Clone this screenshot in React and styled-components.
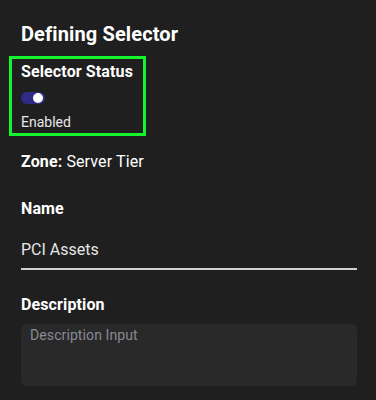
import React from 'react'
import styled, { createGlobalStyle } from 'styled-components'

const GlobalStyle = createGlobalStyle`
  html, body {
    margin: 0;
    padding: 0;
    background: #1f1f1f;
    font-family: Roboto, "Liberation Sans", sans-serif;
    color: #ffffff;
  }
`

const Page = styled.div`
  width: 376px;
  height: 400px;
  overflow: hidden;
  padding: 22px 19px 0 21px;
  box-sizing: border-box;
`

const Title = styled.h2`
  margin: 0;
  font-size: 20px;
  font-weight: 700;
  letter-spacing: 0.12px;
  line-height: 24px;
`

const StatusBox = styled.div`
  margin: 10px 0 0 -12px;
  width: 137px;
  height: 80px;
  box-sizing: border-box;
  border: 3px solid #14f52e;
  padding: 3px 0 0 9px;
  display: flex;
  flex-direction: column;
`

const Label = styled.div`
  font-size: 16px;
  font-weight: 700;
  letter-spacing: 0.12px;
  line-height: 20px;
`

const Toggle = styled.div`
  margin-top: 10px;
  width: 24px;
  height: 12px;
  border-radius: 6px;
  background: #2f2b86;
  position: relative;
  &::after {
    content: '';
    position: absolute;
    right: 2px;
    top: 1px;
    width: 10px;
    height: 10px;
    border-radius: 50%;
    background: #ffffff;
  }
`

const Small = styled.div`
  margin-top: 9px;
  font-size: 14px;
  line-height: 18px;
  color: #e8e8e8;
`

const Zone = styled.div`
  margin-top: 16px;
  font-size: 16px;
  letter-spacing: 0.12px;
  line-height: 20px;
  b { font-weight: 700; }
`

const Field = styled.div`
  margin-top: ${p => p.$gap}px;
  display: flex;
  flex-direction: column;
`

const Value = styled.div`
  margin-top: 20px;
  font-size: 16px;
  line-height: 22px;
  color: #e6e6e6;
  padding-bottom: 7px;
  border-bottom: 2px solid #d0d0d0;
`

const TextArea = styled.div`
  margin-top: 9px;
  height: 62px;
  border-radius: 6px;
  background: #292929;
  padding: 2px 9px;
  box-sizing: border-box;
  font-size: 14px;
  letter-spacing: 0.1px;
  line-height: 18px;
  color: #878a94;
`

export default function App() {
  return (
    <>
      <GlobalStyle />
      <Page>
        <Title>Defining Selector</Title>
        <StatusBox>
          <Label>Selector Status</Label>
          <Toggle />
          <Small>Enabled</Small>
        </StatusBox>
        <Zone><b>Zone:</b> Server Tier</Zone>
        <Field $gap={27}>
          <Label>Name</Label>
          <Value>PCI Assets</Value>
        </Field>
        <Field $gap={25}>
          <Label>Description</Label>
          <TextArea>Description Input</TextArea>
        </Field>
      </Page>
    </>
  )
}
